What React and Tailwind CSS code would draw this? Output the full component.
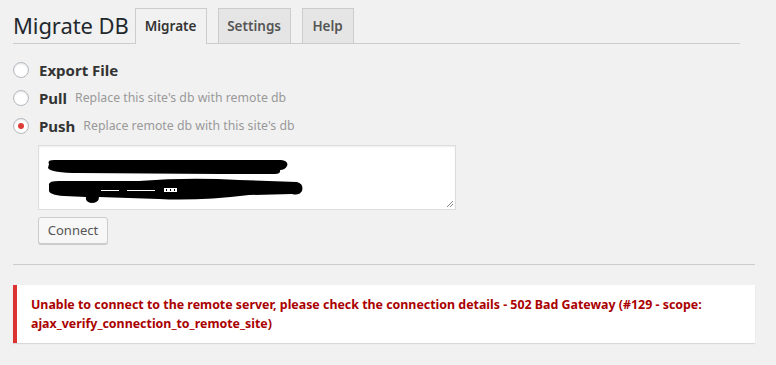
import React from "react";

function Radio({ checked }) {
  return (
    <span className="relative inline-block w-[16px] h-[16px] rounded-full border border-[#b4b9be] bg-white shadow-[inset_0_1px_2px_rgba(0,0,0,0.1)] shrink-0">
      {checked && (
        <span className="absolute left-[4px] top-[4px] w-[6px] h-[6px] rounded-full bg-[#dd3d36]" />
      )}
    </span>
  );
}

function Option({ label, desc, checked }) {
  return (
    <div className="flex items-center h-[28px]">
      <Radio checked={checked} />
      <span className="ml-[10px] text-[15px] font-bold text-[#333]">{label}</span>
      {desc && <span className="ml-[8px] text-[12.3px] text-[#999]">{desc}</span>}
    </div>
  );
}

export default function App() {
  return (
    <div
      className="w-[776px] h-[365px] bg-[#f1f1f1] overflow-hidden"
      style={{ fontFamily: '"Noto Sans", "Open Sans", sans-serif' }}
    >
      <div className="pl-[13px] pr-[36px] pt-[8px]">
        <div className="flex items-end border-b border-[#ccc] h-[36px]">
          <h1 className="text-[22px] leading-[30px] text-[#23282d] mr-[6px] self-center pb-[2px] tracking-[-0.1px]">Migrate DB</h1>
          <div className="w-[72px] h-[36px] flex items-center justify-center border border-b-0 border-[#ccc] bg-[#f1f1f1] text-[13.5px] font-semibold text-[#333] -mb-px pb-px">
            Migrate
          </div>
          <div className="ml-[11px] w-[73px] h-[35px] flex items-center justify-center border border-b-0 border-[#ccc] bg-[#e5e5e5] text-[13.5px] font-semibold text-[#555]">
            Settings
          </div>
          <div className="ml-[11px] w-[52px] h-[35px] flex items-center justify-center border border-b-0 border-[#ccc] bg-[#e5e5e5] text-[13.5px] font-semibold text-[#555]">
            Help
          </div>
        </div>
      </div>
      <div className="pl-[13px] pt-[12px]">
        <Option label="Export File" />
        <Option label="Pull" desc="Replace this site's db with remote db" />
        <Option label="Push" desc="Replace remote db with this site's db" checked />
      </div>
      <div className="pl-[38px] pt-[5px]">
        <div className="relative w-[418px] h-[65px] bg-white border border-[#ddd] shadow-[inset_0_1px_2px_rgba(0,0,0,0.07)]">
          <svg width="418" height="65" className="absolute left-0 top-0">
            <path d="M10 18 Q8 14 15 14 L242 14 Q250 15 248 20 Q246 24 241 24 Q242 28 236 28 L180 28 L40 27 Q12 27 9 22 Z" fill="#000" />
            <path d="M10 39 Q9 35 20 35 L100 35 Q150 31 200 34 L258 36 Q265 38 263 45 Q260 50 253 48 L210 49 Q160 55 120 53 L60 51 Q60 57 52 57 Q46 56 47 51 L25 50 Q9 49 10 44 Z" fill="#000" />
            <rect x="125" y="42" width="13" height="4" fill="#fff" />
            <rect x="127" y="43" width="1" height="2" fill="#000" />
            <rect x="131" y="43" width="1" height="2" fill="#000" />
            <rect x="135" y="43" width="1" height="2" fill="#000" />
            <rect x="88" y="44" width="28" height="1" fill="#fff" />
            <rect x="62" y="44" width="18" height="1" fill="#fff" />
            <path d="M408 61 L414 55 M411 61 L414 58" stroke="#888" strokeWidth="1" />
          </svg>
        </div>
        <button className="mt-[7px] h-[27px] w-[70px] bg-[#f7f7f7] border border-[#ccc] rounded-[3px] shadow-[0_1px_0_#ccc] text-[13px] text-[#555] leading-none">
          Connect
        </button>
      </div>
      <div className="ml-[13px] mt-[20px] mr-[21px] border-t border-[#ccc]" />
      <div className="ml-[13px] mr-[21px] mt-[20px] bg-white border-l-[4px] border-[#dc3232] shadow-[0_1px_1px_rgba(0,0,0,0.1)] pl-[14px] pr-[12px] py-[10px]">
        <p className="text-[12.4px] font-bold text-[#a00] leading-[19px]">
          Unable to connect to the remote server, please check the connection details - 502 Bad Gateway (#129 - scope: ajax_verify_connection_to_remote_site)
        </p>
      </div>
    </div>
  );
}
